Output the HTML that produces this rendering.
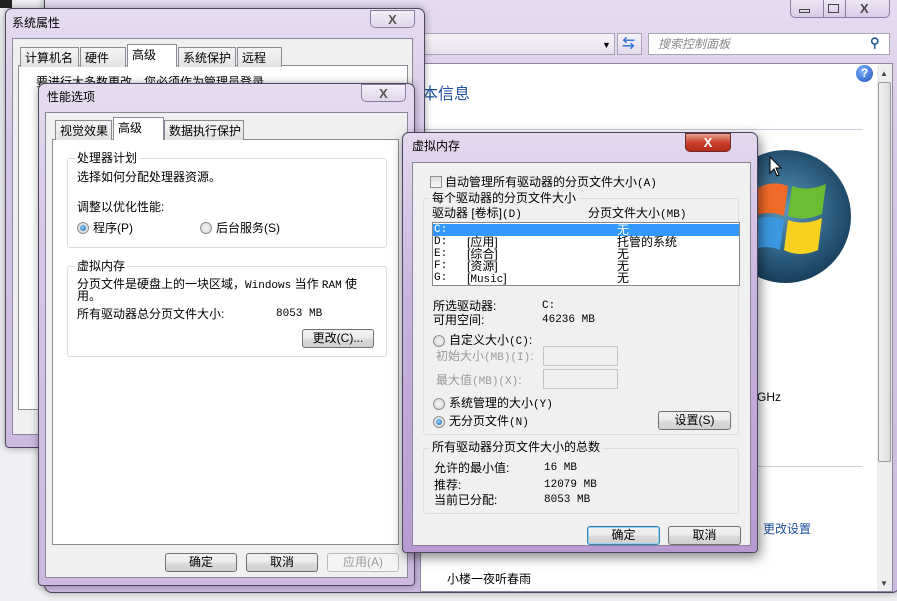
<!DOCTYPE html>
<html><head><meta charset="utf-8">
<style>
*{margin:0;padding:0;box-sizing:border-box}
body{width:897px;height:601px;overflow:hidden;position:relative;background:#eef0f3;font-family:"Liberation Sans","Noto Sans CJK SC",sans-serif;font-size:12px;color:#000}
.a{position:absolute}
.t{position:absolute;white-space:nowrap;font-size:12px;line-height:13px}
.win{position:absolute;border:1px solid #4e4560;border-radius:7px 7px 4px 4px;background:linear-gradient(180deg,#e6dcf0 0%,#d6c6e6 30%,#cdb9e0 100%);box-shadow:0 0 8px rgba(0,0,0,.35)}
.panel{position:absolute;background:#f0f0f0;border:1px solid #8a8599}
.btn{position:absolute;height:19px;border:1px solid #707070;border-radius:3px;background:linear-gradient(#f2f2f2,#ebebeb 50%,#dddddd 51%,#cfcfcf);text-align:center;line-height:17px;font-size:12px}
.tab{position:absolute;height:20px;border:1px solid #898c95;border-bottom:none;background:linear-gradient(#f4f4f4,#e2e2e2);padding:3px 4px 0;font-size:12px;line-height:14px;white-space:nowrap}
.tab.sel{background:#fff;height:23px;z-index:2}
.grp{position:absolute;border:1px solid #d5dfe5;border-radius:3px}
.radio{position:absolute;width:12px;height:12px;border-radius:50%;border:1px solid #8e8f8f;background:radial-gradient(#f4f4f4,#d4d4d4)}
.radio.on::after{content:"";position:absolute;left:2px;top:2px;width:6px;height:6px;border-radius:50%;background:radial-gradient(circle at 40% 40%,#8ad0ff,#1a5fa8)}
.x{position:absolute;width:45px;height:19px;border:1px solid #8a7fa0;border-radius:0 0 5px 5px;background:linear-gradient(#efe6f5,#d7c9e4);text-align:center;font-weight:bold;color:#555;font-size:13px;line-height:17px}
.mono{font-family:"Liberation Mono","Noto Sans CJK SC",monospace;font-size:11px}
</style></head><body>
<div class="a" style="left:0;top:0;width:12px;height:8px;background:#222"></div>
<div class="win" style="left:44px;top:-8px;width:856px;height:601px;border-radius:8px"></div>
<div class="a" style="left:790px;top:0;width:100px;height:18px;border:1px solid #8a7fa0;border-top:none;border-radius:0 0 5px 5px;background:linear-gradient(#eee6f4,#d9cbe6)"></div>
<div class="a" style="left:823px;top:0;width:1px;height:18px;background:#8a7fa0"></div>
<div class="a" style="left:845px;top:0;width:1px;height:18px;background:#8a7fa0"></div>
<div class="a" style="left:799px;top:9px;width:11px;height:4px;border:1px solid #444"></div>
<div class="a" style="left:828px;top:4px;width:11px;height:9px;border:1px solid #444"></div>
<div class="t" style="left:860px;top:2px;font-weight:bold;color:#444;font-size:13px">X</div>
<div class="a" style="left:420px;top:33px;width:195px;height:22px;background:linear-gradient(#f6f3f9,#e7e1ee);border:1px solid #a9a3b6;border-left:none"></div>
<div class="t" style="left:602px;top:39px;font-size:9px">▼</div>
<div class="a" style="left:617px;top:33px;width:25px;height:22px;background:linear-gradient(#f6f3f9,#e4dced);border:1px solid #a9a3b6"></div>
<div class="t" style="left:622px;top:37px;color:#2a6fcf;font-weight:bold;font-size:13px">⇆</div>
<div class="a" style="left:648px;top:33px;width:242px;height:22px;background:#fff;border:1px solid #a9a3b6"></div>
<div class="t" style="left:658px;top:38px;color:#888;font-style:italic">搜索控制面板</div>
<div class="t" style="left:870px;top:36px;color:#2a5fa0;font-size:13px;font-weight:bold">⚲</div>
<div class="a" style="left:420px;top:63px;width:473px;height:529px;background:#fff;border:1px solid #8d87a0"></div>
<div class="a" style="left:856px;top:65px;width:17px;height:17px;border-radius:50%;background:radial-gradient(circle at 40% 35%,#7fb4ff,#1d4fb8);color:#fff;font-weight:bold;text-align:center;line-height:17px;font-size:12px">?</div>
<div class="a" style="left:877px;top:64px;width:15px;height:527px;background:#eee"></div>
<div class="a" style="left:878px;top:82px;width:13px;height:380px;border:1px solid #999;border-radius:2px;background:linear-gradient(90deg,#f2f2f2,#dcdcdc)"></div>
<div class="t" style="left:880px;top:67px;font-size:8px;color:#444">▲</div>
<div class="t" style="left:880px;top:577px;font-size:8px;color:#444">▼</div>
<div class="t" style="left:422px;top:86px;font-size:16px;line-height:18px;color:#1e4fa0">本信息</div>
<div class="a" style="left:420px;top:129px;width:443px;height:1px;background:#ccd"></div>
<div class="a" style="left:720px;top:150px;width:131px;height:133px;border-radius:50%;background:radial-gradient(circle at 50% 45%,#5a94b8,#1d4a6a 65%,#0a2232)"></div>
<svg class="a" style="left:740px;top:170px" width="100" height="100" viewBox="0 0 100 100">
<path d="M18 18 Q32 10 48 16 L44 46 Q30 40 14 46 Z" fill="#f26a28"/>
<path d="M52 16 Q68 22 86 14 L82 44 Q64 52 48 46 Z" fill="#6cbc34"/>
<path d="M14 50 Q30 44 44 50 L40 80 Q26 74 10 80 Z" fill="#3c98e0"/>
<path d="M48 50 Q64 56 82 48 L78 80 Q60 88 44 80 Z" fill="#f8d020"/>
</svg>
<div class="t" style="left:757px;top:391px;font-size:12px">GHz</div>
<div class="a" style="left:757px;top:466px;width:106px;height:1px;background:#ccd"></div>
<div class="t" style="left:763px;top:523px;color:#1e4fa0">更改设置</div>
<div class="t" style="left:447px;top:573px">小楼一夜听春雨</div>

<div class="win" style="left:5px;top:8px;width:420px;height:440px"></div>
<div class="t" style="left:12px;top:17px">系统属性</div>
<div class="x" style="left:370px;top:10px;height:18px;background:linear-gradient(#f3eef7,#e0d6ea)">X</div>
<div class="panel" style="left:12px;top:38px;width:401px;height:397px"></div>
<div class="a" style="left:18px;top:65px;width:390px;height:345px;background:#fff;border:1px solid #898c95"></div>
<div class="tab" style="left:20px;top:47px;width:59px">计算机名</div>
<div class="tab" style="left:80px;top:47px;width:46px">硬件</div>
<div class="tab sel" style="left:127px;top:44px;width:50px">高级</div>
<div class="tab" style="left:178px;top:47px;width:58px">系统保护</div>
<div class="tab" style="left:237px;top:47px;width:45px">远程</div>
<div class="t" style="left:36px;top:76px">要进行大多数更改，您必须作为管理员登录。</div>

<div class="win" style="left:38px;top:83px;width:377px;height:503px"></div>
<div class="t" style="left:47px;top:91px">性能选项</div>
<div class="x" style="left:361px;top:84px;height:18px;background:linear-gradient(#f3eef7,#e0d6ea)">X</div>
<div class="panel" style="left:45px;top:112px;width:363px;height:466px"></div>
<div class="a" style="left:52px;top:139px;width:347px;height:406px;background:#fff;border:1px solid #898c95"></div>
<div class="tab" style="left:55px;top:120px;width:57px">视觉效果</div>
<div class="tab sel" style="left:113px;top:117px;width:51px">高级</div>
<div class="tab" style="left:164px;top:120px;width:80px">数据执行保护</div>
<div class="grp" style="left:67px;top:158px;width:320px;height:90px;background:#fff"></div>
<div class="t" style="left:75px;top:152px;background:#fff;padding:0 2px">处理器计划</div>
<div class="t" style="left:77px;top:171px">选择如何分配处理器资源。</div>
<div class="t" style="left:77px;top:201px">调整以优化性能:</div>
<div class="radio on" style="left:77px;top:222px"></div>
<div class="t" style="left:93px;top:222px">程序(P)</div>
<div class="radio" style="left:200px;top:222px"></div>
<div class="t" style="left:216px;top:222px">后台服务(S)</div>
<div class="grp" style="left:67px;top:266px;width:320px;height:91px;background:#fff"></div>
<div class="t" style="left:75px;top:260px;background:#fff;padding:0 2px">虚拟内存</div>
<div class="t" style="left:77px;top:278px">分页文件是硬盘上的一块区域，<span class="mono">Windows</span> 当作 <span class="mono">RAM</span> 使</div>
<div class="t" style="left:77px;top:290px">用。</div>
<div class="t" style="left:77px;top:308px">所有驱动器总分页文件大小:</div>
<div class="t mono" style="left:276px;top:308px">8053 MB</div>
<div class="btn" style="left:302px;top:329px;width:72px">更改(C)...</div>
<div class="btn" style="left:165px;top:553px;width:72px">确定</div>
<div class="btn" style="left:246px;top:553px;width:72px">取消</div>
<div class="btn" style="left:327px;top:553px;width:72px;color:#999;border-color:#bbb;background:#f4f4f4">应用(A)</div>

<div class="win" style="left:402px;top:132px;width:356px;height:421px;background:linear-gradient(180deg,#e4d8ee,#c9b3de 40%,#b89ad2);box-shadow:2px 4px 12px rgba(0,0,0,.5)"></div>
<div class="t" style="left:412px;top:140px">虚拟内存</div>
<div class="a" style="left:685px;top:133px;width:46px;height:19px;border:1px solid #6a2a2a;border-radius:0 0 5px 5px;background:linear-gradient(#e8a090,#c8402c 50%,#b82a18);color:#fff;font-weight:bold;text-align:center;line-height:17px;font-size:13px">X</div>
<div class="panel" style="left:412px;top:162px;width:339px;height:384px"></div>
<div class="a" style="left:430px;top:176px;width:12px;height:12px;border:1px solid #8e8f8f;background:linear-gradient(#ddd,#f8f8f8)"></div>
<div class="t" style="left:445px;top:176px">自动管理所有驱动器的分页文件大小<span class="mono">(A)</span></div>
<div class="grp" style="left:423px;top:198px;width:316px;height:237px"></div>
<div class="t" style="left:430px;top:192px;background:#f0f0f0;padding:0 2px">每个驱动器的分页文件大小</div>
<div class="t" style="left:432px;top:207px">驱动器 [卷标]<span class="mono">(D)</span></div>
<div class="t" style="left:588px;top:207px">分页文件大小<span class="mono">(MB)</span></div>
<div class="a" style="left:432px;top:222px;width:308px;height:64px;background:#fff;border:1px solid #828790"></div>
<div class="a" style="left:433px;top:224px;width:306px;height:12px;background:#3399ff"></div>
<div class="t mono" style="left:434px;top:224px;color:#fff;line-height:12px">C:</div>
<div class="t" style="left:617px;top:224px;color:#fff;line-height:12px">无</div>
<div class="t mono" style="left:434px;top:236px;line-height:12px">D:</div><div class="t" style="left:467px;top:236px;line-height:12px">[应用]</div><div class="t" style="left:617px;top:236px;line-height:12px">托管的系统</div>
<div class="t mono" style="left:434px;top:248px;line-height:12px">E:</div><div class="t" style="left:467px;top:248px;line-height:12px">[综合]</div><div class="t" style="left:617px;top:248px;line-height:12px">无</div>
<div class="t mono" style="left:434px;top:260px;line-height:12px">F:</div><div class="t" style="left:467px;top:260px;line-height:12px">[资源]</div><div class="t" style="left:617px;top:260px;line-height:12px">无</div>
<div class="t mono" style="left:434px;top:272px;line-height:12px">G:</div><div class="t" style="left:467px;top:272px;line-height:12px">[<span class="mono">Music</span>]</div><div class="t" style="left:617px;top:272px;line-height:12px">无</div>
<div class="t" style="left:433px;top:300px">所选驱动器:</div><div class="t mono" style="left:542px;top:300px">C:</div>
<div class="t" style="left:433px;top:314px">可用空间:</div><div class="t mono" style="left:542px;top:314px">46236 MB</div>
<div class="radio" style="left:433px;top:335px"></div><div class="t" style="left:449px;top:334px">自定义大小<span class="mono">(C)</span>:</div>
<div class="t" style="left:436px;top:350px;color:#999">初始大小<span class="mono">(MB)(I)</span>:</div>
<div class="a" style="left:543px;top:346px;width:75px;height:20px;border:1px solid #c4c4c4;background:#f0f0f0"></div>
<div class="t" style="left:436px;top:374px;color:#999">最大值<span class="mono">(MB)(X)</span>:</div>
<div class="a" style="left:543px;top:369px;width:75px;height:20px;border:1px solid #c4c4c4;background:#f0f0f0"></div>
<div class="radio" style="left:433px;top:398px"></div><div class="t" style="left:449px;top:397px">系统管理的大小<span class="mono">(Y)</span></div>
<div class="radio on" style="left:433px;top:416px"></div><div class="t" style="left:449px;top:415px">无分页文件<span class="mono">(N)</span></div>
<div class="btn" style="left:658px;top:411px;width:73px">设置(S)</div>
<div class="grp" style="left:423px;top:448px;width:316px;height:66px"></div>
<div class="t" style="left:430px;top:441px;background:#f0f0f0;padding:0 2px">所有驱动器分页文件大小的总数</div>
<div class="t" style="left:434px;top:462px">允许的最小值:</div><div class="t mono" style="left:544px;top:462px">16 MB</div>
<div class="t" style="left:434px;top:479px">推荐:</div><div class="t mono" style="left:544px;top:479px">12079 MB</div>
<div class="t" style="left:434px;top:494px">当前已分配:</div><div class="t mono" style="left:544px;top:494px">8053 MB</div>
<div class="btn" style="left:587px;top:526px;width:73px;border-color:#3c7fb1;box-shadow:inset 0 0 0 1px #8ed3f8">确定</div>
<div class="btn" style="left:668px;top:526px;width:73px">取消</div>
<svg class="a" style="left:769px;top:156px" width="14" height="22" viewBox="0 0 14 22"><path d="M1 1 L1 17 L5 13 L8 20 L10 19 L7 12 L12 12 Z" fill="#fff" stroke="#000" stroke-width="1"/></svg>
</body></html>
